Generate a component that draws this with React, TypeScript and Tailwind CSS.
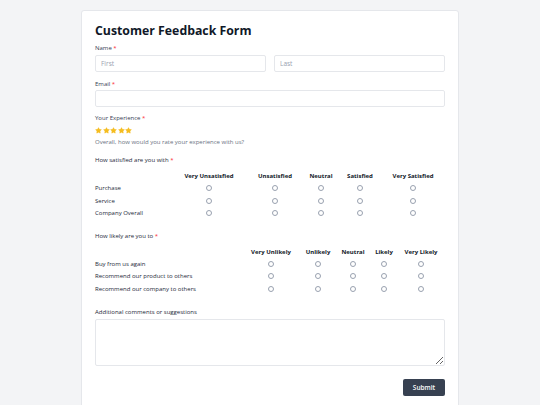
import { Star } from "lucide-react";

const satisfaction = {
  cols: ["Very Unsatisfied", "Unsatisfied", "Neutral", "Satisfied", "Very Satisfied"],
  rows: ["Purchase", "Service", "Company Overall"],
  grid: "grid-cols-[76px_76px_56px_36px_42px_64px]",
};

const likelihood = {
  cols: ["Very Unlikely", "Unlikely", "Neutral", "Likely", "Very Likely"],
  rows: ["Buy from us again", "Recommend our product to others", "Recommend our company to others"],
  grid: "grid-cols-[146px_60px_34px_36px_26px_48px]",
};

const Req = () => <span className="text-red-500"> *</span>;

const Radio = () => <span className="block w-[6px] h-[6px] rounded-full border border-gray-400 bg-white" />;

const Matrix = ({ cols, rows, grid }: { cols: string[]; rows: string[]; grid: string }) => (
  <div className="mt-[6px]">
    <div className={`grid ${grid} h-[10px] items-center`}>
      <div />
      {cols.map(c => (
        <div key={c} className="text-center font-bold text-gray-900 whitespace-nowrap">
          {c}
        </div>
      ))}
    </div>
    <div className="mt-[1px]">
      {rows.map(r => (
        <div key={r} className={`grid ${grid} h-[12.5px] items-center`}>
          <div className="text-gray-800 whitespace-nowrap">{r}</div>
          {cols.map(c => (
            <div key={c} className="flex justify-center">
              <Radio />
            </div>
          ))}
        </div>
      ))}
    </div>
  </div>
);

export default function App() {
  return (
    <div className="h-[405px] overflow-hidden bg-gray-100 pt-[10px] font-['Open_Sans',sans-serif] text-[6px] leading-[10px]">
      <div className="mx-auto w-[378px] min-h-[420px] bg-white border border-gray-200 rounded-[3px] px-[13px] pt-[12px]">
        <h1 className="text-[12.3px] leading-[16px] font-bold text-gray-900">Customer Feedback Form</h1>

        <div className="mt-[4px] text-gray-700">
          Name<Req />
        </div>
        <div className="mt-[2px] flex gap-[8px]">
          <input placeholder="First" className="w-full h-[17px] rounded-[2px] border border-gray-200 px-[5px] text-[6.5px] placeholder:text-gray-400 outline-none" />
          <input placeholder="Last" className="w-full h-[17px] rounded-[2px] border border-gray-200 px-[5px] text-[6.5px] placeholder:text-gray-400 outline-none" />
        </div>

        <div className="mt-[7px] text-gray-700">
          Email<Req />
        </div>
        <input className="mt-[1px] block w-full h-[17px] rounded-[2px] border border-gray-200 outline-none" />

        <div className="mt-[6px] text-gray-700">
          Your Experience<Req />
        </div>
        <div className="mt-[2px] flex gap-[0.5px] h-[10px] items-center">
          {[0, 1, 2, 3, 4].map(i => (
            <Star key={i} className="w-[7px] h-[7px] text-[#f5bd1f]" fill="#f5bd1f" strokeWidth={1} />
          ))}
        </div>
        <div className="mt-[2px] text-gray-500">Overall, how would you rate your experience with us?</div>

        <div className="mt-[8px] text-gray-800">
          How satisfied are you with<Req />
        </div>
        <Matrix {...satisfaction} />

        <div className="mt-[11px] text-gray-800">
          How likely are you to<Req />
        </div>
        <Matrix {...likelihood} />

        <div className="mt-[12px] text-gray-800">Additional comments or suggestions</div>
        <textarea className="mt-[2px] block w-full h-[47px] rounded-[2px] border border-gray-200 outline-none resize-y" />

        <div className="mt-[13px] flex justify-end">
          <button className="w-[42px] h-[17px] rounded-[2px] bg-[#374151] text-white text-[6.5px] font-semibold">Submit</button>
        </div>
      </div>
    </div>
  );
}
